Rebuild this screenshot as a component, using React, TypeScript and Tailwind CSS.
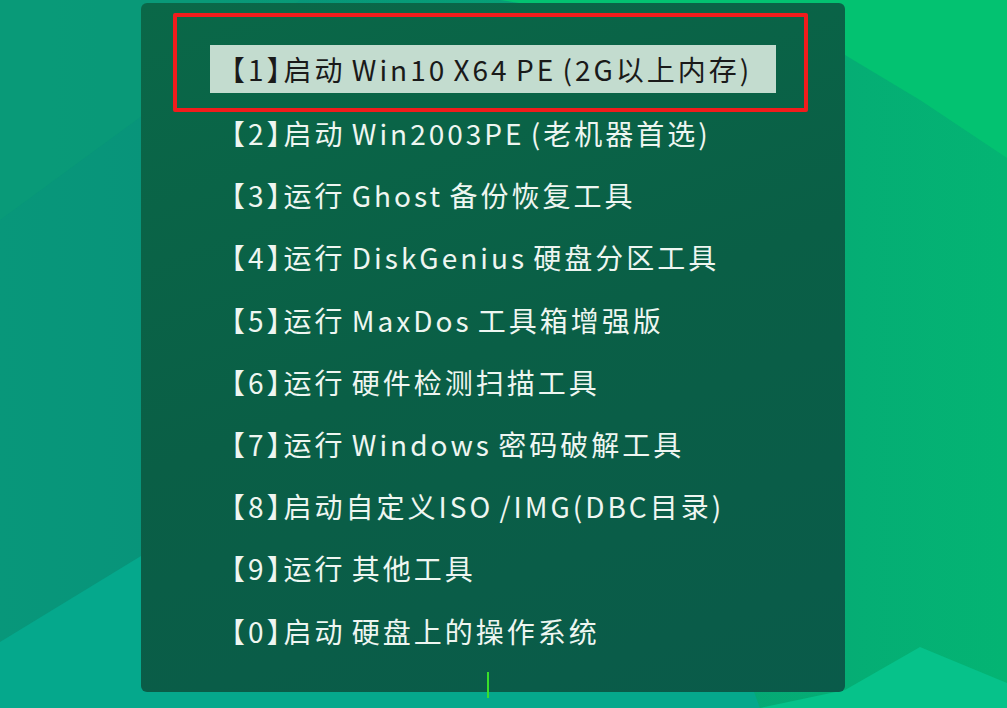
import React from "react";

const rows = [
  "【2】启动 Win2003PE (老机器首选)",
  "【3】运行 Ghost 备份恢复工具",
  "【4】运行 DiskGenius 硬盘分区工具",
  "【5】运行 MaxDos 工具箱增强版",
  "【6】运行 硬件检测扫描工具",
  "【7】运行 Windows 密码破解工具",
  "【8】启动自定义ISO /IMG(DBC目录)",
  "【9】运行 其他工具",
  "【0】启动 硬盘上的操作系统",
];

const textStyle: React.CSSProperties = {
  fontFamily: '"Noto Sans CJK SC", "Noto Sans", sans-serif',
  fontFeatureSettings: '"halt" 1',
};

export default function App() {
  return (
    <div
      className="relative w-[1007px] h-[708px] overflow-hidden bg-[linear-gradient(90deg,#08977a_0%,#08937a_20%,#06a775_70%,#04b473_100%)]"
      style={textStyle}
    >
      <svg className="absolute inset-0" width="1007" height="708" viewBox="0 0 1007 708">
        <polygon points="0,0 1007,0 1007,158 920,100 845,55 500,0" fill="#03c271" />
        <polygon points="0,0 300,0 0,220" fill="#0a9c76" opacity="0.6" />
        <polygon points="0,642 600,276 760,708 0,708" fill="#05a88c" />
        <polygon points="760,708 845,690 920,647 1007,683 1007,708" fill="#06c28a" />
      </svg>
      <div className="relative ml-[141px] mt-[3px] w-[704px] h-[689px] rounded-[6px] bg-[linear-gradient(160deg,#0a6848_0%,#0a5f46_50%,#0a5b4a_100%)] pt-[10px] pl-[32px]">
        <div className="w-[635px] h-[99px] border-[4px] border-[#f21c1c] rounded-[2px] pt-[28px] pl-[33px]">
          <div className="w-[566px] h-[48px] bg-[#c3dccf] text-[#1a1a1a] text-[28px] leading-[48px] tracking-[3px] [word-spacing:-3px] pl-[21px] whitespace-nowrap">
            【1】启动 Win10 X64 PE (2G以上内存)
          </div>
        </div>
        <div className="mt-[-10px] pl-[58px]">
          {rows.map((r) => (
            <div
              key={r}
              className="h-[62.2px] flex items-center text-[28px] tracking-[3px] [word-spacing:-3px] text-[#eef6f1] whitespace-nowrap"
            >
              {r}
            </div>
          ))}
        </div>
        <div className="absolute left-[346px] top-[669px] w-[2px] h-[26px] bg-[#39e02a]" />
      </div>
    </div>
  );
}
